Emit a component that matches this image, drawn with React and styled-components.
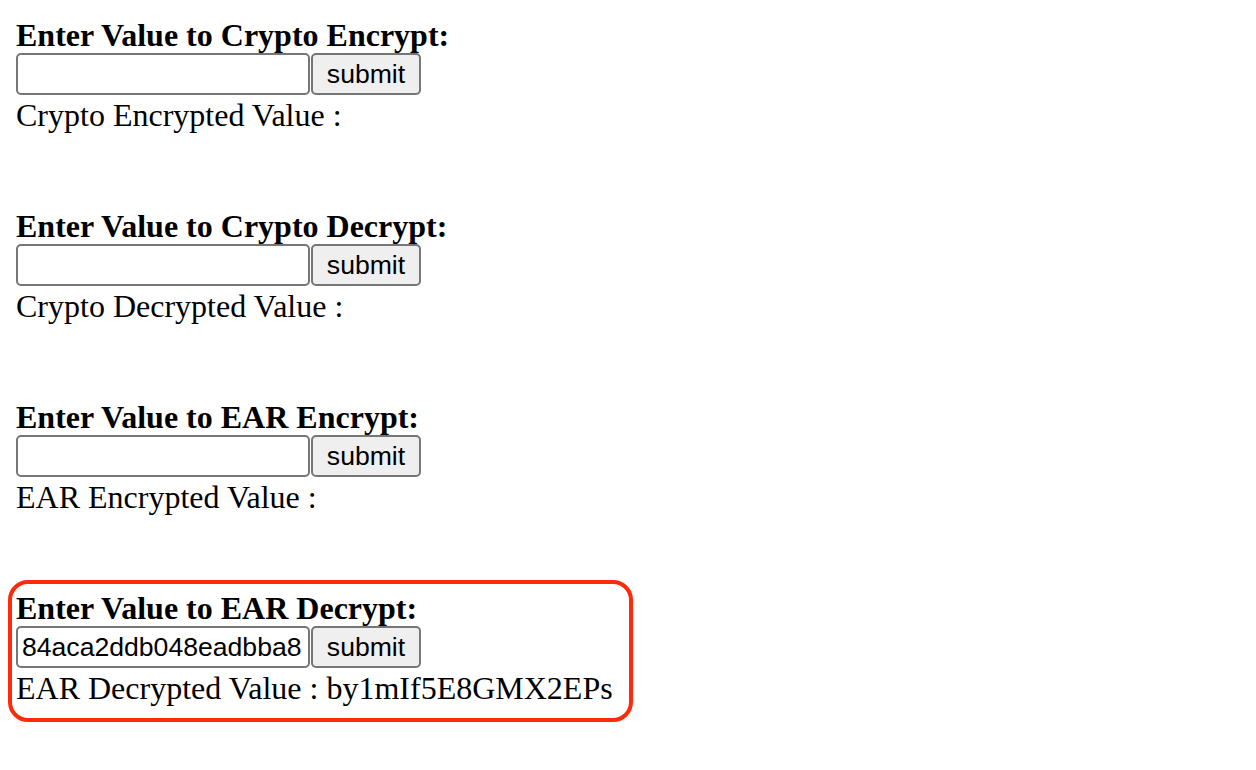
import React, { useState } from 'react'
import styled, { css, createGlobalStyle } from 'styled-components'

const GlobalStyle = createGlobalStyle`
  body {
    margin: 0;
    background: #fff;
    color: #000;
    font-family: "Liberation Serif", "Times New Roman", serif;
    font-size: 32px;
  }
`

const Container = styled.div`
  display: flex;
  flex-direction: column;
  align-items: flex-start;
  gap: 75px;
  padding: 16px;
`

// the last block carries the red annotation frame
const Section = styled.div`
  display: flex;
  flex-direction: column;
  box-sizing: border-box;
  ${(p) =>
    p.$marked &&
    css`
      width: 625px;
      height: 142px;
      margin: -9px 0 0 -8px;
      padding: 5px 4px 13px;
      border: 4px solid #ff2a0a;
      border-radius: 20px;
    `}
`

const Title = styled.b`
  display: block;
  box-sizing: border-box;
  height: 37px;
  padding-top: 1px;
  line-height: 37px;
  white-space: nowrap;
`

const Row = styled.div`
  display: flex;
  height: 42px;
`

const Input = styled.input`
  box-sizing: border-box;
  width: 294px;
  height: 42px;
  margin: 0;
  padding: 2px 4px;
  border: 2px solid #767676;
  border-radius: 5px;
  font-family: "Liberation Sans", Arial, sans-serif;
  font-size: 26.6px;
  color: #000;
  background: #fff;
  outline: none;
`

const Button = styled.button`
  box-sizing: border-box;
  width: 110px;
  height: 42px;
  margin: 0 0 0 1px;
  padding: 2px 12px;
  border: 2px solid #767676;
  border-radius: 5px;
  background: #efefef;
  font-family: "Liberation Sans", Arial, sans-serif;
  font-size: 26.6px;
  color: #000;
`

const Result = styled.div`
  box-sizing: border-box;
  height: 37px;
  padding-top: 2px;
  line-height: 37px;
  white-space: nowrap;
`

const sections = [
  { title: 'Enter Value to Crypto Encrypt:', label: 'Crypto Encrypted Value :', value: '', output: '' },
  { title: 'Enter Value to Crypto Decrypt:', label: 'Crypto Decrypted Value :', value: '', output: '' },
  { title: 'Enter Value to EAR Encrypt:', label: 'EAR Encrypted Value :', value: '', output: '' },
  { title: 'Enter Value to EAR Decrypt:', label: 'EAR Decrypted Value :', value: '84aca2ddb048eadbba8', output: 'by1mIf5E8GMX2EPs', marked: true },
]

function Converter({ title, label, value, output, marked }) {
  const [text, setText] = useState(value)
  return (
    <Section $marked={marked}>
      <Title>{title}</Title>
      <Row>
        <Input value={text} onChange={(e) => setText(e.target.value)} />
        <Button>submit</Button>
      </Row>
      <Result>{label} {output}</Result>
    </Section>
  )
}

export default function App() {
  return (
    <>
      <GlobalStyle />
      <Container>
        {sections.map((s) => (
          <Converter key={s.title} {...s} />
        ))}
      </Container>
    </>
  )
}
